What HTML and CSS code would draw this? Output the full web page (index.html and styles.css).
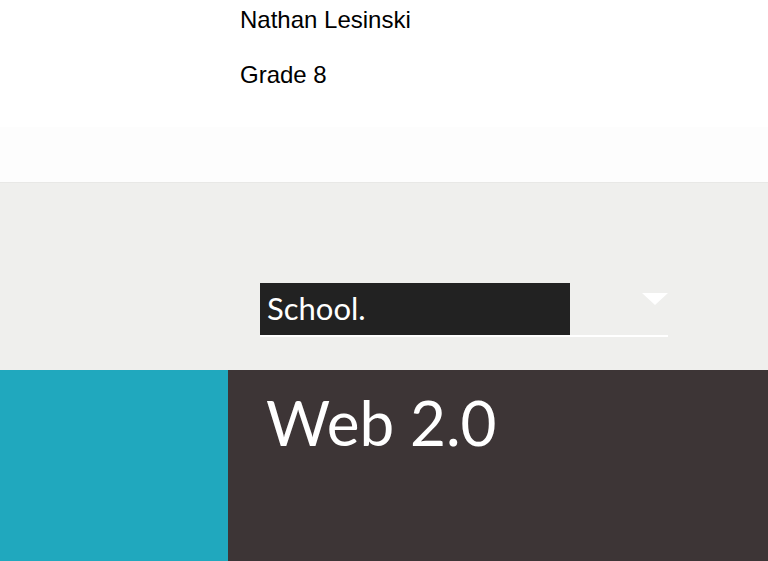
FILE: index.html
```html
<!DOCTYPE html>
<html>
<head>
<meta charset="utf-8">
<link rel="stylesheet" href="styles.css">
</head>
<body>
<header class="top">
  <div class="names">
    <p class="name">Nathan Lesinski</p>
    <p class="name">Grade 8</p>
  </div>
  <div class="band"></div>
</header>
<section class="picker">
  <div class="select">
    <div class="select-label">School.</div>
    <svg class="arrow" width="26" height="12" viewBox="0 0 26 12"><polygon points="0,0 26,0 13,12" fill="#ffffff"/></svg>
  </div>
</section>
<section class="hero">
  <div class="side"></div>
  <div class="main">
    <h1 class="title">Web 2.0</h1>
  </div>
</section>
</body>
</html>
```
FILE: styles.css
```css
html, body {
  margin: 0;
  padding: 0;
  background: #ffffff;
}
body {
  width: 768px;
  height: 561px;
  overflow: hidden;
}
.top {
  height: 183px;
  display: flex;
  flex-direction: column;
  background: #ffffff;
}
.names {
  height: 127px;
  padding-left: 240px;
  box-sizing: border-box;
  padding-top: 6px;
}
.name {
  margin: 0 0 27px 0;
  font-family: "Liberation Sans", Arial, sans-serif;
  font-size: 24px;
  line-height: 28px;
  color: #000000;
}
.band {
  flex: 1;
  background: #fdfdfd;
  border-bottom: 1px solid #e8e8e6;
}
.picker {
  height: 187px;
  background: #efefed;
  padding: 100px 0 0 260px;
  box-sizing: border-box;
}
.select {
  width: 408px;
  height: 54px;
  display: flex;
  justify-content: space-between;
  align-items: flex-start;
  border-bottom: 2px solid #ffffff;
  box-sizing: border-box;
}
.select-label {
  width: 310px;
  height: 52px;
  background: #222222;
  color: #ffffff;
  font-family: "Lato", "Open Sans", sans-serif;
  font-size: 31px;
  line-height: 50px;
  padding-left: 7px;
  box-sizing: border-box;
}
.arrow {
  margin-top: 10px;
  margin-right: 0;
}
.hero {
  height: 191px;
  display: flex;
}
.side {
  width: 228px;
  background: #20a8be;
}
.main {
  flex: 1;
  background: #3d3536;
  padding: 12px 0 0 38px;
  box-sizing: border-box;
}
.title {
  margin: 0;
  font-family: "Lato", "Open Sans", sans-serif;
  font-weight: 400;
  font-size: 62px;
  line-height: 80px;
  color: #ffffff;
}
```
